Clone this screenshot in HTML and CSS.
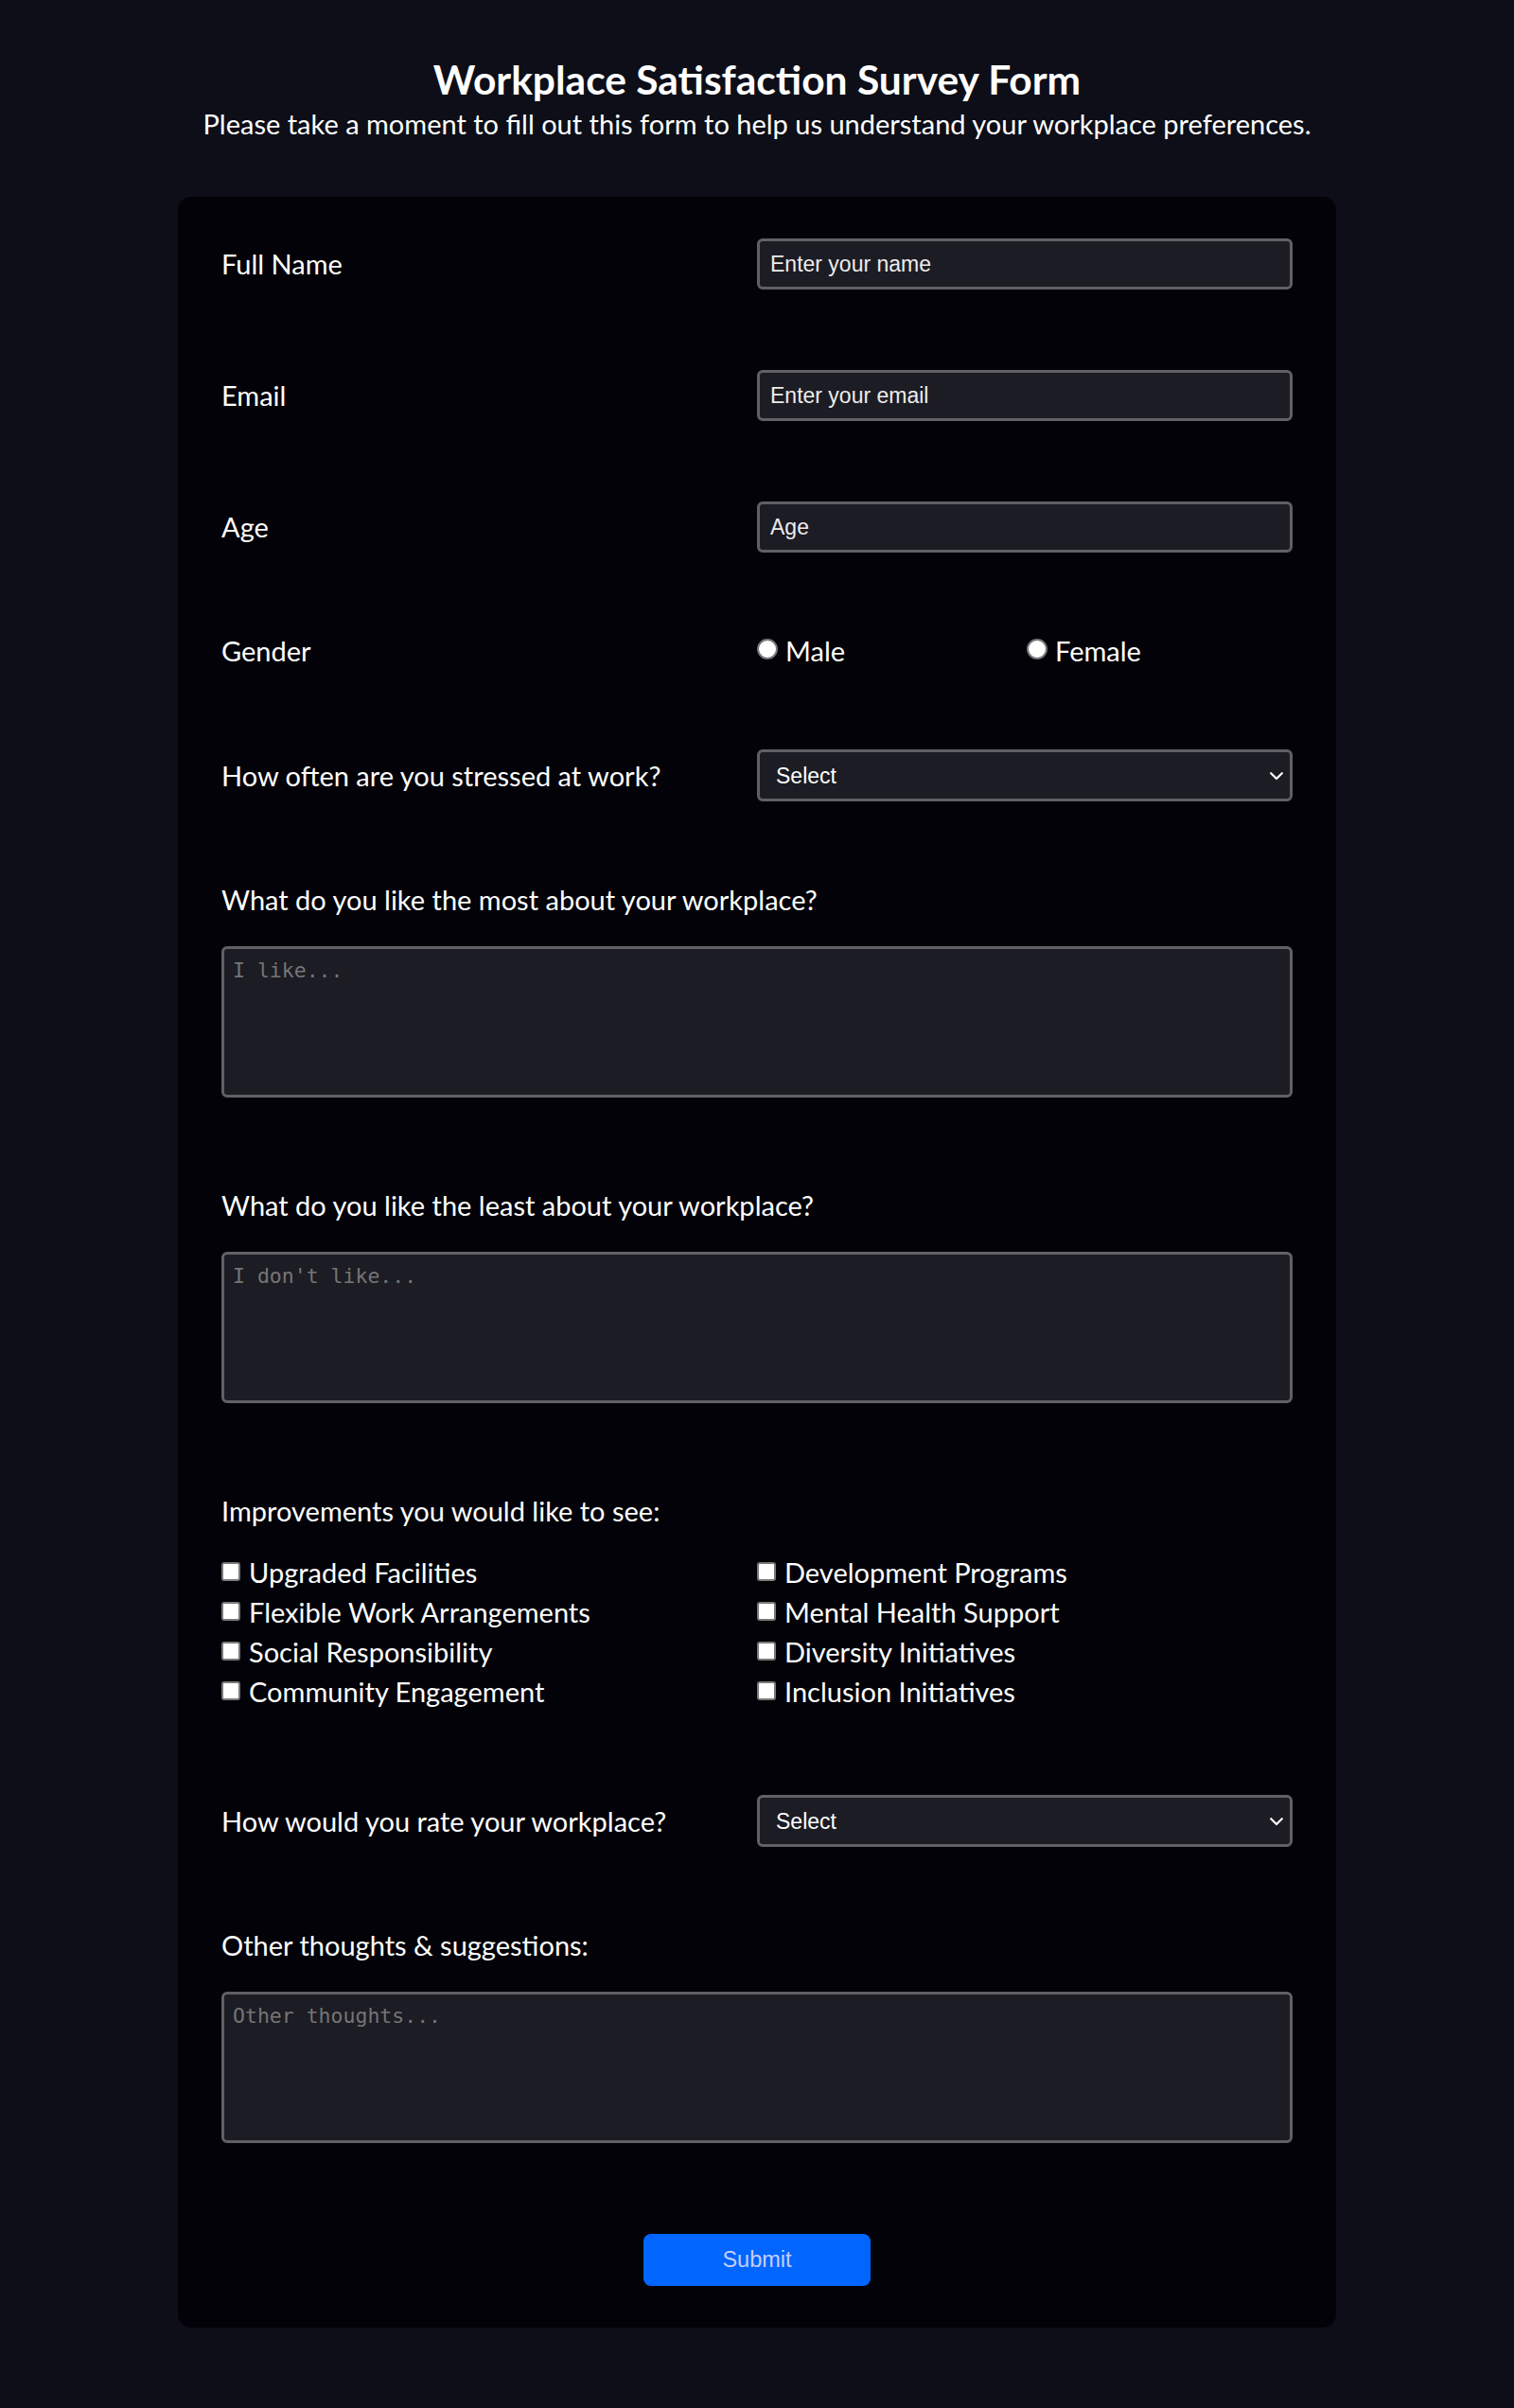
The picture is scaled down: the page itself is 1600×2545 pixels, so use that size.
FILE: index.html
```html
<!DOCTYPE html>
<html lang="en">
<head>
<meta charset="utf-8">
<title>Workplace Satisfaction Survey Form</title>
<link rel="stylesheet" href="styles.css">
</head>
<body>
<header class="page-header">
  <h1 class="title">Workplace Satisfaction Survey Form</h1>
  <p class="description">Please take a moment to fill out this form to help us understand your workplace preferences.</p>
</header>
<form class="survey">
  <div class="row">
    <label class="label" for="name">Full Name</label>
    <input class="field" id="name" type="text" placeholder="Enter your name">
  </div>
  <div class="row">
    <label class="label" for="email">Email</label>
    <input class="field" id="email" type="email" placeholder="Enter your email">
  </div>
  <div class="row">
    <label class="label" for="age">Age</label>
    <input class="field" id="age" type="number" placeholder="Age">
  </div>
  <div class="row">
    <span class="label">Gender</span>
    <div class="radios">
      <label class="option"><input type="radio" name="gender" class="radio">Male</label>
      <label class="option"><input type="radio" name="gender" class="radio radio-second">Female</label>
    </div>
  </div>
  <div class="row row-select">
    <label class="label" for="stress">How often are you stressed at work?</label>
    <div class="select-wrap">
      <select id="stress" class="field select">
        <option>Select</option>
        <option>Never</option>
        <option>Rarely</option>
        <option>Sometimes</option>
        <option>Often</option>
        <option>Always</option>
      </select>
      <svg class="chevron" viewBox="0 0 14 9" aria-hidden="true"><polyline points="1.2,1.2 7,7 12.8,1.2" fill="none" stroke="#ffffff" stroke-width="2.2" stroke-linecap="round" stroke-linejoin="round"/></svg>
    </div>
  </div>
  <div class="block">
    <label class="label" for="most">What do you like the most about your workplace?</label>
    <textarea class="area" id="most" placeholder="I like..."></textarea>
  </div>
  <div class="block">
    <label class="label" for="least">What do you like the least about your workplace?</label>
    <textarea class="area" id="least" placeholder="I don't like..."></textarea>
  </div>
  <div class="checks-block">
    <span class="label">Improvements you would like to see:</span>
    <div class="checks">
      <label class="option"><input type="checkbox" class="check">Upgraded Facilities</label>
      <label class="option"><input type="checkbox" class="check">Flexible Work Arrangements</label>
      <label class="option"><input type="checkbox" class="check">Social Responsibility</label>
      <label class="option"><input type="checkbox" class="check">Community Engagement</label>
      <label class="option"><input type="checkbox" class="check">Development Programs</label>
      <label class="option"><input type="checkbox" class="check">Mental Health Support</label>
      <label class="option"><input type="checkbox" class="check">Diversity Initiatives</label>
      <label class="option"><input type="checkbox" class="check">Inclusion Initiatives</label>
    </div>
  </div>
  <div class="row row-select">
    <label class="label" for="rate">How would you rate your workplace?</label>
    <div class="select-wrap">
      <select id="rate" class="field select">
        <option>Select</option>
        <option>Excellent</option>
        <option>Good</option>
        <option>Average</option>
        <option>Poor</option>
      </select>
      <svg class="chevron" viewBox="0 0 14 9" aria-hidden="true"><polyline points="1.2,1.2 7,7 12.8,1.2" fill="none" stroke="#ffffff" stroke-width="2.2" stroke-linecap="round" stroke-linejoin="round"/></svg>
    </div>
  </div>
  <div class="block block-last">
    <label class="label" for="other">Other thoughts &amp; suggestions:</label>
    <textarea class="area" id="other" placeholder="Other thoughts..."></textarea>
  </div>
  <div class="actions">
    <button type="submit" class="submit">Submit</button>
  </div>
</form>
</body>
</html>
```

FILE: styles.css
```css
* { box-sizing: border-box; }

body {
  margin: 0;
  background: #0d0e17;
  color: #ffffff;
  font-family: "Lato", "Noto Sans", sans-serif;
}

.page-header {
  text-align: center;
  padding-top: 59px;
}

.title {
  margin: 0;
  font-size: 42.5px;
  line-height: 50px;
  font-weight: 700;
}

.description {
  margin: 4px 0 0;
  font-size: 29px;
  line-height: 36px;
}

.survey {
  width: 1224px;
  margin: 59px auto 0;
  padding: 44px 46px;
  background: #020208;
  border-radius: 14px;
}

.row {
  display: grid;
  grid-template-columns: 1fr 1fr;
  align-items: center;
  margin-bottom: 85px;
}

.label {
  display: block;
  font-size: 29px;
  line-height: 38px;
}

.field {
  display: block;
  width: 100%;
  height: 54px;
  margin: 0;
  padding: 0 11px;
  background: #1c1c24;
  border: 3px solid #606065;
  border-radius: 6px;
  color: #ffffff;
  font-family: "Liberation Sans", Arial, sans-serif;
  font-size: 23px;
  outline: none;
}

.field::placeholder {
  color: #ececec;
  opacity: 1;
}

.field::-webkit-inner-spin-button,
.field::-webkit-outer-spin-button {
  -webkit-appearance: none;
  margin: 0;
}

.select-wrap {
  position: relative;
}

.select {
  -webkit-appearance: none;
  appearance: none;
  height: 55px;
  padding: 0 40px 0 17px;
}

.chevron {
  position: absolute;
  right: 10px;
  top: 50%;
  width: 14px;
  height: 9px;
  margin-top: -4px;
  pointer-events: none;
}

.radios {
  display: grid;
  grid-template-columns: 1fr 1fr;
}

.option {
  display: flex;
  align-items: center;
  font-size: 29px;
  line-height: 38px;
}

.radio {
  -webkit-appearance: none;
  appearance: none;
  flex: none;
  width: 22px;
  height: 22px;
  margin: 0 8px 5px 0;
  border: 2px solid #767676;
  border-radius: 50%;
  background: #ffffff;
}

.radio-second {
  margin-left: 2px;
}

.block {
  margin-bottom: 95px;
}

.block-last {
  margin-bottom: 96px;
}

.area {
  display: block;
  width: 100%;
  height: 160px;
  margin: 30px 0 0;
  padding: 10px 9px;
  background: #1c1c24;
  border: 3px solid #606065;
  border-radius: 6px;
  color: #ffffff;
  font-family: "DejaVu Sans Mono", "Liberation Mono", monospace;
  font-size: 21.5px;
  resize: none;
  outline: none;
}

.area::placeholder {
  color: #757575;
  opacity: 1;
}

.checks-block {
  margin-bottom: 88px;
}

.checks {
  display: grid;
  grid-template-columns: 1fr 1fr;
  grid-template-rows: repeat(4, 42px);
  grid-auto-flow: column;
  margin-top: 25px;
}

.check {
  -webkit-appearance: none;
  appearance: none;
  flex: none;
  width: 20px;
  height: 20px;
  margin: 0 9px 3px 0;
  border: 2px solid #7a7a7a;
  border-radius: 3px;
  background: #ffffff;
}

.actions {
  display: flex;
  justify-content: center;
}

.submit {
  width: 240px;
  height: 55px;
  border: none;
  border-radius: 8px;
  background: #0066ff;
  color: #c9cdf8;
  font-family: "Liberation Sans", Arial, sans-serif;
  font-size: 23.5px;
}
```
